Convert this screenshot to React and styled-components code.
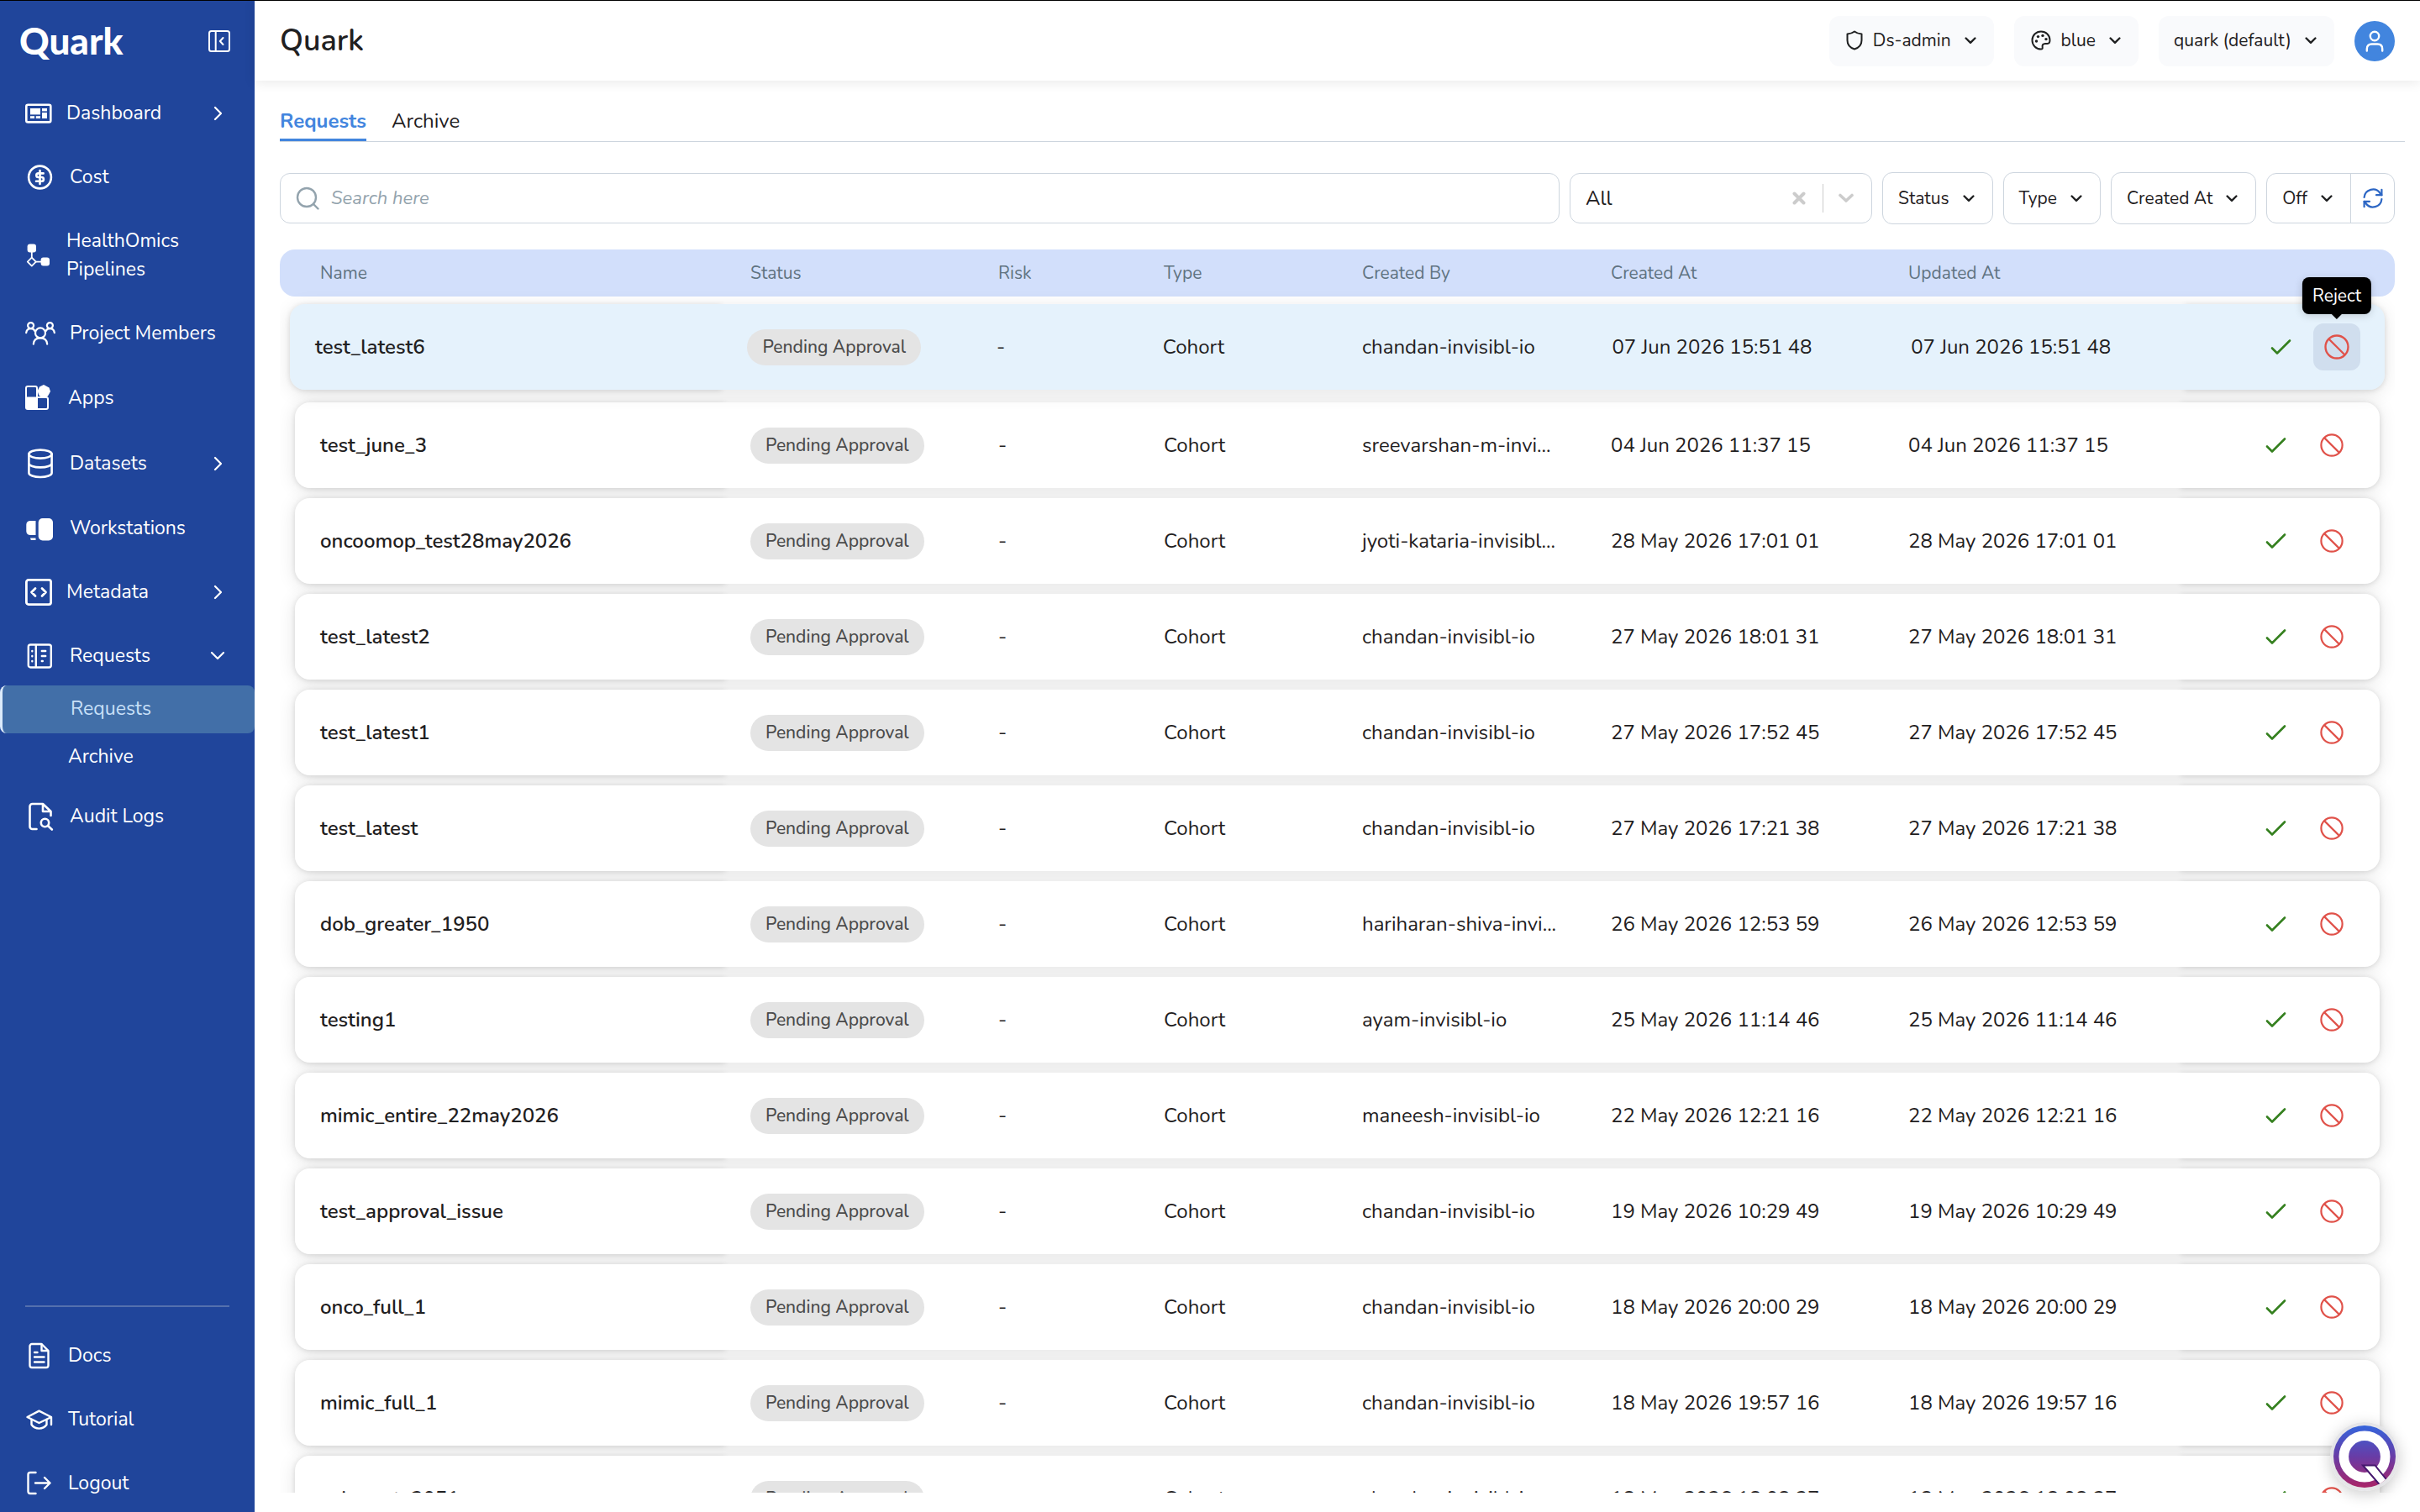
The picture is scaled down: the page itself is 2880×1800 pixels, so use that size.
import React from "react";
import styled, { createGlobalStyle, css } from "styled-components";

const color = {
  sidebar: "#20459b",
  active: "#426fa8",
  activeText: "#c9e0f8",
  ink: "#1f2021",
  muted: "#607381",
  line: "#cdd5de",
  accent: "#4285de",
  head: "#d2dffb",
  hover: "#e5f2fc",
  approve: "#35801f",
  reject: "#e0524a",
};

const GlobalStyle = createGlobalStyle`
  *, *::before, *::after { box-sizing: border-box; }
  body {
    margin: 0;
    background: #fff;
    color: ${color.ink};
    font-family: Nunito, "Open Sans", Lato, sans-serif;
    font-size: 21px;
    line-height: 34px;
  }
  button, input { font: inherit; color: inherit; }
  button { border: 0; background: none; padding: 0; cursor: pointer; }
  a { color: inherit; text-decoration: none; }
  svg { display: block; flex: none; }
`;

const Shell = styled.div`
  display: flex;
  height: 100vh;
  overflow: hidden;
  border-top: 1px solid #000;
`;

/* ---------- Sidebar ---------- */

const Sidebar = styled.aside`
  display: flex;
  flex-direction: column;
  flex: none;
  width: 303px;
  background: ${color.sidebar};
  color: #fff;
  font-size: 23px;
`;

const Brand = styled.div`
  display: flex;
  align-items: center;
  justify-content: space-between;
  height: 96px;
  padding: 0 29px 0 23px;
`;

const BrandName = styled.span`
  padding-bottom: 2px;
  font-family: Lato, "Open Sans", sans-serif;
  font-weight: 900;
  font-size: 44px;
  line-height: 56px;
`;

const NavList = styled.ul`
  list-style: none;
  margin: 0;
  padding: 0;
`;

const NavLink = styled.a`
  display: flex;
  align-items: center;
  gap: 17px;
  padding: 21px 36px 21px 30px;
`;

const NavLabel = styled.span`
  flex: 1;
`;

const SubList = styled(NavList)`
  margin: -3px 0 4px;
`;

const SubLink = styled.a`
  display: block;
  padding: 11px 0 12px 81px;
  ${(p) =>
    p["aria-current"] &&
    css`
      background: ${color.active};
      color: ${color.activeText};
      border-left: 3px solid #dcebfb;
      border-radius: 8px;
    `}
`;

const SidebarFooter = styled.div`
  margin: auto 0 -4px;
`;

const Rule = styled.hr`
  margin: 0 30px 20px;
  border: 0;
  height: 2px;
  background: #5470ae;
`;

/* ---------- Header ---------- */

const Main = styled.main`
  display: flex;
  flex-direction: column;
  flex: 1;
  min-width: 0;
`;

const Header = styled.header`
  display: flex;
  align-items: center;
  gap: 24px;
  flex: none;
  height: 95px;
  padding: 0 30px;
  box-shadow: 0 2px 14px rgba(0, 0, 0, 0.09);
`;

const Title = styled.h1`
  flex: 1;
  margin: 0;
  font-size: 36px;
  line-height: 48px;
  font-weight: 600;
`;

const MenuButton = styled.button`
  display: flex;
  align-items: center;
  gap: 16px;
  height: 60px;
  padding: 0 21px 2px 18px;
  border-radius: 12px;
  background: #f9fafc;
`;

const ButtonText = styled.span`
  display: flex;
  align-items: center;
  gap: 12px;
  padding-left: 2px;
`;

const Avatar = styled.button`
  display: grid;
  place-items: center;
  width: 48px;
  height: 48px;
  border-radius: 50%;
  background: ${color.accent};
`;

/* ---------- Tabs and filters ---------- */

const Content = styled.div`
  display: flex;
  flex-direction: column;
  flex: 1;
  min-height: 0;
  padding: 27px 18px 23px 30px;
`;

const Tabs = styled.nav`
  display: flex;
  gap: 30px;
  flex: none;
  border-bottom: 1px solid ${color.line};
`;

const Tab = styled.a`
  height: 45px;
  padding-top: 4px;
  font-size: 24px;
  ${(p) =>
    p["aria-current"] &&
    css`
      color: ${color.accent};
      font-weight: 700;
      border-bottom: 3px solid ${color.accent};
    `}
`;

const Filters = styled.div`
  display: flex;
  align-items: center;
  gap: 12px;
  flex: none;
  margin: 36px 12px 30px 0;
`;

const field = css`
  display: flex;
  align-items: center;
  border: 1px solid ${color.line};
  border-radius: 12px;
  background: #fff;
`;

const SearchBox = styled.label`
  ${field}
  flex: 1;
  gap: 14px;
  height: 60px;
  padding: 0 18px;
  font-size: 22px;
`;

const Input = styled.input`
  flex: 1;
  min-width: 0;
  border: 0;
  outline: 0;
  padding: 0;
  background: none;
  &::placeholder {
    color: #93a3ad;
    font-style: italic;
    opacity: 1;
  }
`;

const Combo = styled.div`
  ${field}
  width: 360px;
  height: 60px;
  padding: 0 21px 0 18px;
  font-size: 24px;
`;

const ComboDivider = styled.span`
  width: 1px;
  height: 34px;
  margin: 0 18px 0 20px;
  background: #ccc;
`;

const FilterButton = styled(MenuButton)`
  ${field}
  height: 62px;
  padding: 0 21px 0 18px;
`;

const Refresh = styled.div`
  ${field}
  height: 60px;
`;

const IntervalButton = styled(MenuButton)`
  height: 58px;
  padding: 0 21px 0 18px;
  background: none;
`;

const RefreshButton = styled.button`
  display: grid;
  place-items: center;
  width: 52px;
  height: 58px;
  border-left: 1px solid ${color.line};
`;

/* ---------- Table ---------- */

const Scroller = styled.div`
  flex: 1;
  min-height: 0;
  margin-right: 12px;
  overflow: hidden;
`;

const columns = "512fr 295fr 197fr 236fr 296fr 354fr 354fr 237fr";

const Table = styled.table`
  display: block;
`;

const Head = styled.thead`
  display: block;
`;

const HeadRow = styled.tr`
  display: grid;
  grid-template-columns: ${columns};
  padding: 0 18px;
  border-radius: 18px;
  background: ${color.head};
`;

const HeadCell = styled.th`
  padding: 11px 30px;
  text-align: left;
  font-size: 21px;
  font-weight: 400;
  color: ${color.muted};
`;

const Body = styled.tbody`
  display: grid;
  gap: 12px;
  padding: 12px 18px;
`;

const Cell = styled.td`
  position: relative;
  z-index: 2;
  display: flex;
  align-items: center;
  min-width: 0;
  padding: 0 30px;
  background: #fff;
  font-size: 24px;
  white-space: nowrap;
`;

const NameCell = styled(Cell)`
  z-index: 1;
  font-weight: 600;
  border-radius: 18px 0 0 18px;
  box-shadow: 0 1px 6px rgba(0, 0, 0, 0.12);
`;

const ActionCell = styled(Cell)`
  z-index: 1;
  justify-content: flex-end;
  gap: 11px;
  padding-right: 29px;
  border-radius: 0 18px 18px 0;
  box-shadow: 0 1px 6px rgba(0, 0, 0, 0.12);
`;

const Row = styled.tr`
  display: grid;
  grid-template-columns: ${columns};
  height: 102px;
  border-radius: 18px;
  box-shadow: 0 2px 22px rgba(0, 0, 0, 0.11);
  ${(p) =>
    p.$hovered &&
    css`
      position: relative;
      z-index: 3;
      margin: -3px -6px 3px;
      box-shadow: 0 4px 22px rgba(0, 0, 0, 0.1);
      ${Cell} {
        background: ${color.hover};
      }
    `}
`;

const Badge = styled.span`
  padding: 4px 18px 5px;
  border-radius: 22px;
  background: #e4e4e4;
  color: #4b4b4b;
  font-size: 21px;
  font-weight: 500;
`;

const ActionButton = styled.button`
  position: relative;
  display: grid;
  place-items: center;
  width: 56px;
  height: 56px;
  border-radius: 12px;
  background: ${(p) => (p.$hovered ? "#d0deee" : "none")};
`;

const Tooltip = styled.span`
  position: absolute;
  left: 50%;
  bottom: calc(100% + 11px);
  transform: translateX(-50%);
  padding: 5px 12px;
  border-radius: 8px;
  background: #000;
  color: #fff;
  font-size: 21px;
  box-shadow: 0 2px 10px rgba(0, 0, 0, 0.15);
  &::after {
    content: "";
    position: absolute;
    top: 100%;
    left: 50%;
    transform: translateX(-50%);
    border: 6px solid transparent;
    border-top-color: #000;
    border-bottom: 0;
  }
`;

const Assistant = styled.button`
  position: fixed;
  right: 25px;
  bottom: 25px;
  z-index: 5;
  width: 82px;
  height: 82px;
  border-radius: 50%;
  background: rgba(225, 225, 228, 0.85);
  display: grid;
  place-items: center;
  box-shadow: 0 4px 18px rgba(0, 0, 0, 0.2);
`;

/* ---------- Icons ---------- */

const Line = ({ w, h, sw = 2.6, children, ...rest }) => (
  <svg
    width={w}
    height={h}
    viewBox={`0 0 ${w} ${h}`}
    fill="none"
    stroke="currentColor"
    strokeWidth={sw}
    strokeLinecap="round"
    strokeLinejoin="round"
    aria-hidden="true"
    {...rest}
  >
    {children}
  </svg>
);

const solid = { fill: "currentColor", stroke: "none" };

const DashboardIcon = () => (
  <Line w={32} h={24}>
    <rect x="1.3" y="1.8" width="29" height="20.6" rx="2" />
    <g {...solid}>
      <rect x="6" y="6" width="12" height="7.4" />
      <rect x="20" y="6" width="6" height="3.4" />
      <rect x="20" y="11" width="6" height="7" />
      <rect x="6" y="15.2" width="5" height="2.8" />
      <rect x="12.8" y="15.2" width="5.2" height="2.8" />
    </g>
  </Line>
);

const CostIcon = () => (
  <Line w={36} h={30}>
    <circle cx="17.5" cy="15" r="13.4" />
    <path d="M17.5 7v16M21.6 10.4h-6a2.3 2.3 0 0 0 0 4.6h3.9a2.4 2.4 0 0 1 0 4.8H13" />
  </Line>
);

const PipelineIcon = () => (
  <Line w={32} h={28} sw={1.8}>
    <rect x="2.6" y="0.5" width="10.4" height="10" rx="3" {...solid} />
    <rect x="18.6" y="16.6" width="10.4" height="10" rx="3" {...solid} />
    <path d="M7.8 10v6.4M13 21.6h6" />
    <path d="M7.8 16.6l5 5-5 5-5-5z" />
  </Line>
);

const MembersIcon = () => (
  <Line w={36} h={28} sw={2.2}>
    <circle cx="18" cy="13.4" r="6" />
    <path d="M9.8 26.6c.4-4.6 3.7-7.2 8.2-7.2s7.8 2.6 8.2 7.2" />
    <circle cx="6.6" cy="4.6" r="3.5" />
    <path d="M1.2 13.2c.4-3 2.2-5 5.4-5 2.4 0 4 1 4.8 2.8" />
    <circle cx="29.4" cy="4.6" r="3.5" />
    <path d="M34.8 13.2c-.4-3-2.2-5-5.4-5-2.4 0-4 1-4.8 2.8" />
  </Line>
);

const AppsIcon = () => (
  <Line w={34} h={36} sw={2}>
    <path d="M14 16.5V6a2 2 0 0 0-2-2H3a2 2 0 0 0-2 2v10.5M14 17h11a2 2 0 0 1 2 2v10a2 2 0 0 1-2 2H14z" />
    <path d="M0 16.5h14.5V32H3a3 3 0 0 1-3-3z" {...solid} />
    <path d="M22 2l6.5 3.5L30 10l-3 5.5-5 2.5-5.5-3L14.5 9.5l2.5-5z" {...solid} />
  </Line>
);

const DatasetsIcon = () => (
  <Line w={36} h={36}>
    <ellipse cx="18" cy="6.6" rx="13.6" ry="5" />
    <path d="M4.4 6.6v22.4c0 2.8 6 5 13.6 5s13.6-2.2 13.6-5V6.6M4.4 17.4c0 2.8 6 5 13.6 5s13.6-2.2 13.6-5" />
  </Line>
);

const WorkstationsIcon = () => (
  <Line w={36} h={34}>
    <g {...solid}>
      <path d="M6.5 8h6v17h-6C3 25 1.3 23 1.3 20.5v-8C1.3 10 3 8 6.5 8zM6 28.5h6.5V31H6.8z" />
      <rect x="15.7" y="5" width="17.3" height="26.5" rx="5" />
    </g>
  </Line>
);

const MetadataIcon = () => (
  <Line w={32} h={32} sw={2.8}>
    <rect x="1.4" y="1.4" width="29.2" height="29.2" rx="2.5" />
    <path d="M12 11.5L7.5 16l4.5 4.5M20 11.5l4.5 4.5-4.5 4.5" />
  </Line>
);

const RequestsIcon = () => (
  <Line w={36} h={30} sw={2.4}>
    <rect x="3.8" y="1.5" width="27" height="27" rx="2.5" />
    <path d="M12.8 2v26" />
    <path d="M8.3 9v.2M8.3 15v.2M8.3 21v.2M19.8 9h4.4M19.8 15h4.4M19.8 21h1" />
  </Line>
);

const AuditIcon = () => (
  <Line w={36} h={34}>
    <path d="M13.5 32H8.5a3 3 0 0 1-3-3V5a3 3 0 0 1 3-3h12.5l9.5 9v5M21 2.5V11h9" />
    <circle cx="23.5" cy="24.5" r="4.7" />
    <path d="M27.2 28.2l4.6 4.3" />
  </Line>
);

const DocsIcon = () => (
  <Line w={34} h={32} sw={2.4}>
    <path d="M19.5 2H8a2.5 2.5 0 0 0-2.5 2.5v23A2.5 2.5 0 0 0 8 30h17a2.5 2.5 0 0 0 2.5-2.5V10z" />
    <path d="M19.5 2.5V10h7.5M11 12h3.5M11 17.5h11.5M11 23.5h11.5" />
  </Line>
);

const TutorialIcon = () => (
  <Line w={34} h={24} sw={2.4}>
    <path d="M16.5 1.6L31 9l-14.5 7L2.5 9z" />
    <path d="M7.5 12v6c2.2 3.2 5 4.6 9 4.6s6.8-1.4 9-4.6v-6M31 9.5V18" />
  </Line>
);

const LogoutIcon = () => (
  <Line w={34} h={30} sw={2.4}>
    <path d="M12.5 2H6a2.5 2.5 0 0 0-2.5 2.5v20A2.5 2.5 0 0 0 6 27h6.5M12 14.5h17.5M23 8l6.5 6.5L23 21" />
  </Line>
);

const CollapseIcon = () => (
  <Line w={26} h={26} sw={2}>
    <rect x="1" y="1" width="24" height="24" rx="2.5" />
    <path d="M8.7 1v24M17.5 9l-3.7 4 3.7 4" />
  </Line>
);

const ChevronRight = () => (
  <Line w={22} h={18} sw={2.2}>
    <path d="M11 2l7 7-7 7" />
  </Line>
);

const ChevronDown = () => (
  <Line w={18} h={12} sw={2.2}>
    <path d="M3 2l7 7 7-7" />
  </Line>
);

const Caret = () => (
  <Line w={14} h={10} sw={2.4}>
    <path d="M1.6 2.5L7 7.8 12.4 2.5" />
  </Line>
);

const ShieldIcon = () => (
  <Line w={20} h={24} sw={2}>
    <path d="M10 1.5c2.4 1.8 5 2.7 8.5 2.9V12c0 5-3.2 8.8-8.5 10.5C4.7 20.8 1.5 17 1.5 12V4.4C5 4.2 7.6 3.3 10 1.5z" />
  </Line>
);

const PaletteIcon = () => (
  <Line w={24} h={24} sw={2}>
    <path d="M12 1.5C6 1.5 1.5 6.2 1.5 12S6 22.5 12 22.5c1.5 0 2-1 1.7-2.3-.5-2.4.5-4.3 3.3-4.3h2.5c2 0 3-1.6 3-4.2C22.5 6 18 1.5 12 1.5z" />
    <g {...solid}>
      <circle cx="8.5" cy="7.6" r="1.7" />
      <circle cx="14" cy="6.4" r="1.7" />
      <circle cx="18" cy="10.6" r="1.7" />
      <circle cx="6.5" cy="13" r="1.7" />
    </g>
  </Line>
);

const UserIcon = () => (
  <Line w={22} h={26} sw={2.4} stroke="#fff">
    <circle cx="11" cy="7" r="5.2" />
    <path d="M1.8 24.5v-2.3c0-3.7 2.2-5.7 5.7-5.7h7c3.5 0 5.7 2 5.7 5.7v2.3" />
  </Line>
);

const SearchIcon = () => (
  <Line w={28} h={28} sw={2.4} stroke="#93a3ad">
    <circle cx="13" cy="13" r="11" />
    <path d="M21 21l5.5 5.5" />
  </Line>
);

const ClearIcon = () => (
  <Line w={16} h={16} sw={4} stroke="#ccc">
    <path d="M2.5 2.5l11 11M13.5 2.5l-11 11" />
  </Line>
);

const ComboCaret = () => (
  <Line w={18} h={12} sw={3.6} stroke="#ccc">
    <path d="M2 2.5L9 9l7-6.5" />
  </Line>
);

const RefreshIcon = () => (
  <Line w={24} h={24} sw={2.2} stroke="#2c66c4">
    <path d="M1.6 11A10.4 10.4 0 0 1 20.5 6L22.4 8.2M22.4 13A10.4 10.4 0 0 1 3.5 18L1.6 15.8" />
    <path d="M22.4 1.8v6.4H16M1.6 22.2v-6.4H8" />
  </Line>
);

const CheckIcon = () => (
  <Line w={26} h={20} sw={2.6} stroke={color.approve}>
    <path d="M3 11.5l6 6L24 2.5" />
  </Line>
);

const BanIcon = ({ size = 28 }) => (
  <svg width={size} height={size} viewBox="0 0 28 28" fill="none" stroke={color.reject} strokeWidth="2.2" aria-hidden="true">
    <circle cx="14" cy="14" r="12.6" />
    <path d="M5.1 5.1l17.8 17.8" />
  </svg>
);

const AssistantIcon = () => (
  <svg width="74" height="74" viewBox="0 0 74 74" aria-hidden="true">
    <defs>
      <linearGradient id="assistant" x1="0" y1="0" x2="0" y2="1">
        <stop offset="0" stopColor="#3565dc" />
        <stop offset="0.5" stopColor="#683ca6" />
        <stop offset="1" stopColor="#aa2468" />
      </linearGradient>
      <clipPath id="assistant-edge">
        <circle cx="37" cy="37" r="37" />
      </clipPath>
    </defs>
    <circle cx="37" cy="37" r="37" fill="url(#assistant)" />
    <circle cx="37" cy="37" r="24.7" fill="none" stroke="#fff" strokeWidth="11.6" />
    <path d="M35 47.5h14.5l16 20-8 6z" fill="#fff" stroke="#45176e" strokeWidth="2" clipPath="url(#assistant-edge)" />
  </svg>
);

/* ---------- Data ---------- */

const nav = [
  { label: "Dashboard", icon: <DashboardIcon />, chevron: <ChevronRight /> },
  { label: "Cost", icon: <CostIcon /> },
  { label: "HealthOmics Pipelines", icon: <PipelineIcon /> },
  { label: "Project Members", icon: <MembersIcon /> },
  { label: "Apps", icon: <AppsIcon /> },
  { label: "Datasets", icon: <DatasetsIcon />, chevron: <ChevronRight /> },
  { label: "Workstations", icon: <WorkstationsIcon /> },
  { label: "Metadata", icon: <MetadataIcon />, chevron: <ChevronRight /> },
  { label: "Requests", icon: <RequestsIcon />, chevron: <ChevronDown />, children: ["Requests", "Archive"] },
  { label: "Audit Logs", icon: <AuditIcon /> },
];

const footerNav = [
  { label: "Docs", icon: <DocsIcon /> },
  { label: "Tutorial", icon: <TutorialIcon /> },
  { label: "Logout", icon: <LogoutIcon /> },
];

const requests = [
  ["test_latest6", "chandan-invisibl-io", "07 Jun 2026 15:51 48"],
  ["test_june_3", "sreevarshan-m-invi...", "04 Jun 2026 11:37 15"],
  ["oncoomop_test28may2026", "jyoti-kataria-invisibl...", "28 May 2026 17:01 01"],
  ["test_latest2", "chandan-invisibl-io", "27 May 2026 18:01 31"],
  ["test_latest1", "chandan-invisibl-io", "27 May 2026 17:52 45"],
  ["test_latest", "chandan-invisibl-io", "27 May 2026 17:21 38"],
  ["dob_greater_1950", "hariharan-shiva-invi...", "26 May 2026 12:53 59"],
  ["testing1", "ayam-invisibl-io", "25 May 2026 11:14 46"],
  ["mimic_entire_22may2026", "maneesh-invisibl-io", "22 May 2026 12:21 16"],
  ["test_approval_issue", "chandan-invisibl-io", "19 May 2026 10:29 49"],
  ["onco_full_1", "chandan-invisibl-io", "18 May 2026 20:00 29"],
  ["mimic_full_1", "chandan-invisibl-io", "18 May 2026 19:57 16"],
  ["subment_2051", "chandan-invisibl-io", "18 May 2026 18:08 27"],
];

const headings = ["Name", "Status", "Risk", "Type", "Created By", "Created At", "Updated At"];

/* ---------- Parts ---------- */

const NavItem = ({ item }) => (
  <li>
    <NavLink href="#">
      {item.icon}
      <NavLabel>{item.label}</NavLabel>
      {item.chevron}
    </NavLink>
    {item.children && (
      <SubList>
        {item.children.map((label, i) => (
          <li key={label}>
            <SubLink href="#" aria-current={i === 0 ? "page" : undefined}>
              {label}
            </SubLink>
          </li>
        ))}
      </SubList>
    )}
  </li>
);

const RequestRow = ({ request: [name, owner, date], hovered }) => (
  <Row $hovered={hovered}>
    <NameCell>{name}</NameCell>
    <Cell>
      <Badge>Pending Approval</Badge>
    </Cell>
    <Cell>-</Cell>
    <Cell>Cohort</Cell>
    <Cell>{owner}</Cell>
    <Cell>{date}</Cell>
    <Cell>{date}</Cell>
    <ActionCell>
      <ActionButton aria-label="Approve">
        <CheckIcon />
      </ActionButton>
      <ActionButton aria-label="Reject" $hovered={hovered}>
        <BanIcon size={hovered ? 30 : 28} />
        {hovered && <Tooltip role="tooltip">Reject</Tooltip>}
      </ActionButton>
    </ActionCell>
  </Row>
);

export default function App() {
  return (
    <>
      <GlobalStyle />
      <Shell>
        <Sidebar>
          <Brand>
            <BrandName>Quark</BrandName>
            <button aria-label="Collapse sidebar">
              <CollapseIcon />
            </button>
          </Brand>
          <nav>
            <NavList>
              {nav.map((item) => (
                <NavItem key={item.label} item={item} />
              ))}
            </NavList>
          </nav>
          <SidebarFooter>
            <Rule />
            <NavList>
              {footerNav.map((item) => (
                <NavItem key={item.label} item={item} />
              ))}
            </NavList>
          </SidebarFooter>
        </Sidebar>

        <Main>
          <Header>
            <Title>Quark</Title>
            <MenuButton aria-haspopup="menu">
              <ButtonText>
                <ShieldIcon />
                Ds-admin
              </ButtonText>
              <Caret />
            </MenuButton>
            <MenuButton aria-haspopup="menu">
              <ButtonText>
                <PaletteIcon />
                blue
              </ButtonText>
              <Caret />
            </MenuButton>
            <MenuButton aria-haspopup="menu">
              quark (default)
              <Caret />
            </MenuButton>
            <Avatar aria-label="Account">
              <UserIcon />
            </Avatar>
          </Header>

          <Content>
            <Tabs>
              <Tab href="#" aria-current="page">
                Requests
              </Tab>
              <Tab href="#">Archive</Tab>
            </Tabs>

            <Filters>
              <SearchBox>
                <SearchIcon />
                <Input type="search" placeholder="Search here" aria-label="Search requests" />
              </SearchBox>
              <Combo>
                <Input role="combobox" aria-expanded="false" aria-label="Request scope" defaultValue="All" />
                <button aria-label="Clear">
                  <ClearIcon />
                </button>
                <ComboDivider />
                <button aria-label="Open options">
                  <ComboCaret />
                </button>
              </Combo>
              {["Status", "Type", "Created At"].map((label) => (
                <FilterButton key={label} aria-haspopup="menu">
                  {label}
                  <Caret />
                </FilterButton>
              ))}
              <Refresh>
                <IntervalButton aria-haspopup="menu">
                  Off
                  <Caret />
                </IntervalButton>
                <RefreshButton aria-label="Refresh">
                  <RefreshIcon />
                </RefreshButton>
              </Refresh>
            </Filters>

            <Scroller>
              <Table>
                <Head>
                  <HeadRow>
                    {headings.map((h) => (
                      <HeadCell key={h} scope="col">
                        {h}
                      </HeadCell>
                    ))}
                    <HeadCell scope="col" aria-label="Actions" />
                  </HeadRow>
                </Head>
                <Body>
                  {requests.map((request, i) => (
                    <RequestRow key={request[0]} request={request} hovered={i === 0} />
                  ))}
                </Body>
              </Table>
            </Scroller>
          </Content>
        </Main>
      </Shell>
      <Assistant aria-label="Open assistant">
        <AssistantIcon />
      </Assistant>
    </>
  );
}
